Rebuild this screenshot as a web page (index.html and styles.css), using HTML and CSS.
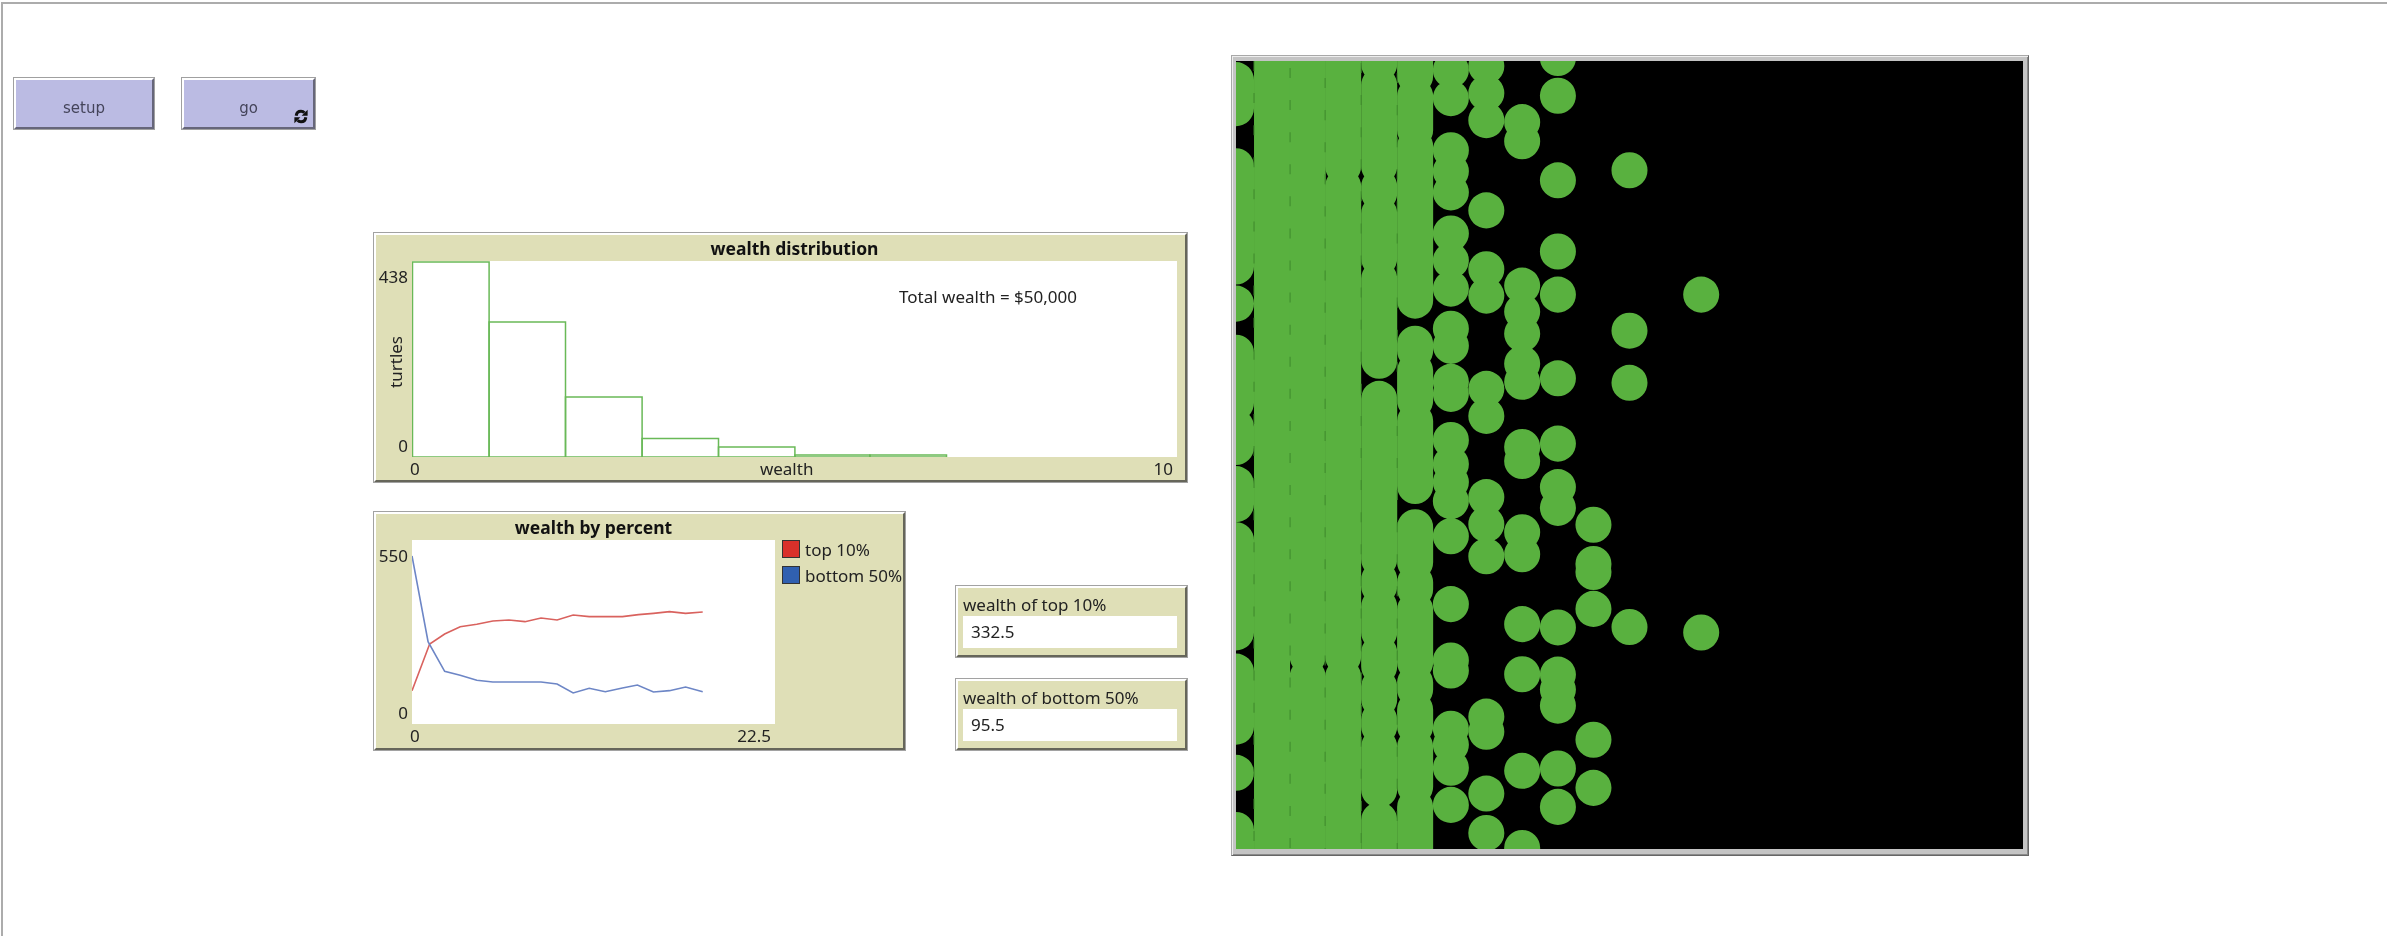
FILE: index.html
```html
<!DOCTYPE html>
<html>
<head>
    <meta charset="UTF-8">
    <title>Wealth distribution</title>
    <link rel="stylesheet" href="styles.css">
</head>
<body>
    <div class="interface">
        <div class="lado">
            <div class="botoes">
                <div class="botao botao-setup">setup</div>
                <div class="botao botao-go">go
                    <svg class="icone-repetir" viewBox="0 0 14 15">
                        <path d="M2.2 6.8C2.6 3.4 5 2.2 7 2.2c1.5 0 2.6.6 3.4 1.6" />
                        <path class="seta" d="M7.6 6.8h6V.8z" />
                        <path d="M11.8 8.2C11.4 11.6 9 12.8 7 12.8c-1.5 0-2.6-.6-3.4-1.6" />
                        <path class="seta" d="M6.4 8.2h-6v6z" />
                    </svg>
                </div>
            </div>

            <div class="plot plot-dist bevel">
                <div class="plot-titulo">wealth distribution</div>
                <div class="eixo-y">
                    <span>438</span>
                    <span class="eixo-nome">turtles</span>
                    <span>0</span>
                </div>
                <div class="plot-area">
                    <svg class="grafico" viewBox="0 0 764 196">
                        <g class="barras">
                            <rect x="0" y="1" width="76.6" height="195" />
                            <rect x="76.6" y="61" width="76.4" height="135" />
                            <rect x="153" y="136" width="76.6" height="60" />
                            <rect x="229.6" y="177.5" width="76.4" height="18.5" />
                            <rect x="306" y="186" width="76.4" height="10" />
                            <rect x="382.4" y="194" width="75" height="2" />
                            <rect x="457.4" y="194" width="76.6" height="2" />
                        </g>
                    </svg>
                    <span class="nota">Total wealth = $50,000</span>
                </div>
                <div class="eixo-x">
                    <span>0</span>
                    <span>wealth</span>
                    <span>10</span>
                </div>
            </div>

            <div class="linha-baixo">
                <div class="plot plot-pct bevel">
                    <div class="plot-titulo">wealth by percent</div>
                    <div class="eixo-y">
                        <span>550</span>
                        <span>0</span>
                    </div>
                    <div class="plot-area">
                        <svg class="grafico" viewBox="97 120 678 552" preserveAspectRatio="none">
                            <polyline class="linha-top" points="97,572 130,432 158,402 187,380 218,373 248,363 278,360 308,365 338,354 368,360 398,345 428,350 458,350 490,350 520,344 548,340 578,335 608,340 640,336" />
                            <polyline class="linha-bottom" points="97,168 127,425 158,514 187,526 218,541 248,546 278,546 308,546 338,546 368,552 398,579 428,565 458,575 490,564 518,555 548,576 578,572 608,561 640,575" />
                        </svg>
                    </div>
                    <div class="legenda">
                        <div class="legenda-item"><i class="cor-top"></i>top 10%</div>
                        <div class="legenda-item"><i class="cor-bottom"></i>bottom 50%</div>
                    </div>
                    <div class="eixo-x">
                        <span>0</span>
                        <span>22.5</span>
                    </div>
                </div>

                <div class="monitores">
                    <div class="monitor bevel">
                        <div class="monitor-nome">wealth of top 10%</div>
                        <div class="monitor-valor">332.5</div>
                    </div>
                    <div class="monitor bevel">
                        <div class="monitor-nome">wealth of bottom 50%</div>
                        <div class="monitor-valor">95.5</div>
                    </div>
                </div>
            </div>
        </div>

        <div class="mundo">
            <svg class="turtles" viewBox="1237 63 786 786" preserveAspectRatio="none">
                <g class="colunas">
                    <path d="M1237 82V110M1237 168V268M1237 305v.01M1237 354V404M1237 428V448M1237 485V505M1237 541V633M1237 672V727M1237 773v.01M1237 830V900" />
                    <path d="M1273 30V900" />
                    <path d="M1308.6 30V657M1308.6 677V900" />
                    <path d="M1344 30V168M1344 188V657M1344 677V900" />
                    <path d="M1380 40V66M1380 87V168M1380 188V195M1380 215V260M1380 280V362M1380 400V560M1380 580V587M1380 607V633M1380 653V667M1380 687V700M1380 720V727M1380 747V790M1380 820V900" />
                    <path d="M1415.9 40V78M1415.9 98V132M1415.9 148V302M1415.9 345V352M1415.9 372V402M1415.9 422V487M1415.9 528V563M1415.9 583V590M1415.9 610V663M1415.9 683V690M1415.9 710V727M1415.9 747V787M1415.9 807V900" />
                    <path d="M1451.6 40v.01M1451.6 72v.01M1451.6 100v.01M1451.6 152v.01M1451.6 173v.01M1451.6 194v.01M1451.6 235v.01M1451.6 262v.01M1451.6 290v.01M1451.6 330v.01M1451.6 347v.01M1451.6 383v.01M1451.6 395v.01M1451.6 441v.01M1451.6 465v.01M1451.6 483v.01M1451.6 502v.01M1451.6 537v.01M1451.6 604.7v.01M1451.6 661v.01M1451.6 671v.01M1451.6 729v.01M1451.6 745v.01M1451.6 768v.01M1451.6 805v.01" />
                    <path d="M1487 40v.01M1487 68v.01M1487 95v.01M1487 122v.01M1487 212v.01M1487 270.7v.01M1487 297v.01M1487 390v.01M1487 417v.01M1487 498v.01M1487 525v.01M1487 557v.01M1487 717v.01M1487 732v.01M1487 793.7v.01M1487 833v.01" />
                    <path d="M1522.8 124v.01M1522.8 143v.01M1522.8 287v.01M1522.8 313v.01M1522.8 335v.01M1522.8 365v.01M1522.8 383v.01M1522.8 448v.01M1522.8 462v.01M1522.8 533v.01M1522.8 555v.01M1522.8 624.7v.01M1522.8 674.7v.01M1522.8 771v.01M1522.8 848v.01" />
                    <path d="M1558.5 60v.01M1558.5 97.7v.01M1558.5 182v.01M1558.5 253v.01M1558.5 296v.01M1558.5 379.5v.01M1558.5 444.6v.01M1558.5 488v.01M1558.5 508.7v.01M1558.5 628v.01M1558.5 675v.01M1558.5 690v.01M1558.5 706v.01M1558.5 768.7v.01M1558.5 807v.01" />
                    <path d="M1594 525.6v.01M1594 564.7v.01M1594 572.7v.01M1594 609.5v.01M1594 740v.01M1594 788v.01" />
                    <path d="M1630 172v.01M1630 332v.01M1630 384v.01M1630 627.6v.01" />
                    <path d="M1701.6 296v.01M1701.6 633v.01" />
                </g>
                <path class="emendas" d="M1255 63V849M1291 70V849M1326 80V849M1362 65V849M1398 75V849" />
            </svg>
        </div>
    </div>
</body>
</html>
```

FILE: styles.css
```css
body {
    margin: 0;
    background-color: #ffffff;
    font-family: "Noto Sans", sans-serif;
    font-size: 17px;
    color: #222222;
}

.interface {
    display: flex;
    height: 932px;
    margin: 2px 0 0 1px;
    border-top: 2px solid #acacac;
    border-left: 2px solid #acacac;
    filter: blur(0.5px);
}

.lado {
    width: 1228px;
    flex: none;
}

.bevel {
    box-sizing: border-box;
    background-color: #dfdfb7;
    border: 2px solid;
    border-color: #ffffff #66665a #66665a #ffffff;
    box-shadow: 0 0 0 1px #a2a2a2;
}

/* botoes */
.botoes {
    display: flex;
    gap: 28px;
    margin: 74px 0 0 11px;
}

.botao {
    position: relative;
    box-sizing: border-box;
    height: 51px;
    display: flex;
    align-items: center;
    justify-content: center;
    padding-top: 9px;
    background-color: #bbbbe3;
    border: 2px solid;
    border-color: #ffffff #66667a #66667a #ffffff;
    box-shadow: 0 0 0 1px #a0a0a0;
    font-family: "DejaVu Sans", sans-serif;
    font-size: 15px;
    color: #44445a;
}

.botao-setup {
    width: 140px;
}

.botao-go {
    width: 133px;
}

.icone-repetir {
    position: absolute;
    right: 5px;
    bottom: 3px;
    width: 14px;
    height: 15px;
}

.icone-repetir path {
    fill: none;
    stroke: #111111;
    stroke-width: 3;
}

.icone-repetir .seta {
    fill: #111111;
    stroke: none;
}

/* plots */
.plot {
    display: grid;
    grid-template-columns: 36px 1fr;
    grid-template-rows: 26px 196px 23px;
    padding-right: 8px;
}

.plot-dist {
    width: 813px;
    height: 249px;
    margin: 104px 0 0 371px;
}

.plot-pct {
    width: 531px;
    height: 238px;
    grid-template-columns: 36px 363px 1fr;
    grid-template-rows: 26px 184px 24px;
    padding-right: 0;
}

.plot-titulo {
    grid-column: 2;
    align-self: center;
    text-align: center;
    font-weight: bold;
    font-size: 17.5px;
    color: #111111;
}

.eixo-y {
    grid-column: 1;
    grid-row: 2;
    display: flex;
    flex-direction: column;
    justify-content: space-between;
    align-items: flex-end;
    padding: 6px 4px 1px 0;
    line-height: 20px;
}

.eixo-nome {
    writing-mode: vertical-rl;
    transform: rotate(180deg);
    margin-right: 2px;
}

.plot-area {
    position: relative;
    grid-column: 2;
    grid-row: 2;
    background-color: #ffffff;
}

.grafico {
    display: block;
    width: 100%;
    height: 100%;
}

.barras rect {
    fill: none;
    stroke: #69b957;
    stroke-width: 1.5;
}

.linha-top,
.linha-bottom {
    fill: none;
    stroke-width: 1.6;
    vector-effect: non-scaling-stroke;
}

.linha-top {
    stroke: #d9625e;
}

.linha-bottom {
    stroke: #6d86c6;
}

.nota {
    position: absolute;
    left: 487px;
    top: 24px;
    white-space: nowrap;
}

.eixo-x {
    grid-column: 2;
    grid-row: 3;
    display: flex;
    justify-content: space-between;
    padding: 0 4px 0 0;
    margin-left: -2px;
    line-height: 23px;
}

.legenda {
    grid-column: 3;
    grid-row: 2;
    padding-left: 7px;
}

.legenda-item {
    display: flex;
    align-items: center;
    gap: 5px;
    height: 18px;
    margin-bottom: 8px;
    white-space: nowrap;
}

.legenda-item i {
    box-sizing: border-box;
    width: 18px;
    height: 18px;
    border: 1px solid #333333;
}

.cor-top {
    background-color: #d9302a;
}

.cor-bottom {
    background-color: #3060b0;
}

/* monitores */
.linha-baixo {
    display: flex;
    align-items: flex-end;
    gap: 51px;
    margin: 30px 0 0 371px;
}

.monitores {
    display: flex;
    flex-direction: column;
    gap: 22px;
    width: 231px;
}

.monitor {
    height: 71px;
    padding: 6px 8px 8px 5px;
}

.monitor-nome {
    line-height: 22px;
    white-space: nowrap;
}

.monitor-valor {
    height: 32px;
    padding-left: 8px;
    line-height: 32px;
    background-color: #ffffff;
}

/* mundo */
.mundo {
    box-sizing: border-box;
    width: 798px;
    height: 801px;
    margin-top: 51px;
    padding: 5px 5px 5px 4px;
    background-color: #c4c4c4;
    border: 1px solid;
    border-color: #a8a8a8 #666666 #666666 #a8a8a8;
    box-shadow: inset 1px 1px 0 #eeeeee, inset -1px -1px 0 #8a8a8a;
}

.turtles {
    display: block;
    width: 787px;
    height: 788px;
    background-color: #000000;
}

.colunas path {
    fill: none;
    stroke: #59b13f;
    stroke-width: 36;
    stroke-linecap: round;
}

.emendas {
    fill: none;
    stroke: #3f8a2c;
    stroke-width: 1;
    stroke-dasharray: 10 22;
}
```
